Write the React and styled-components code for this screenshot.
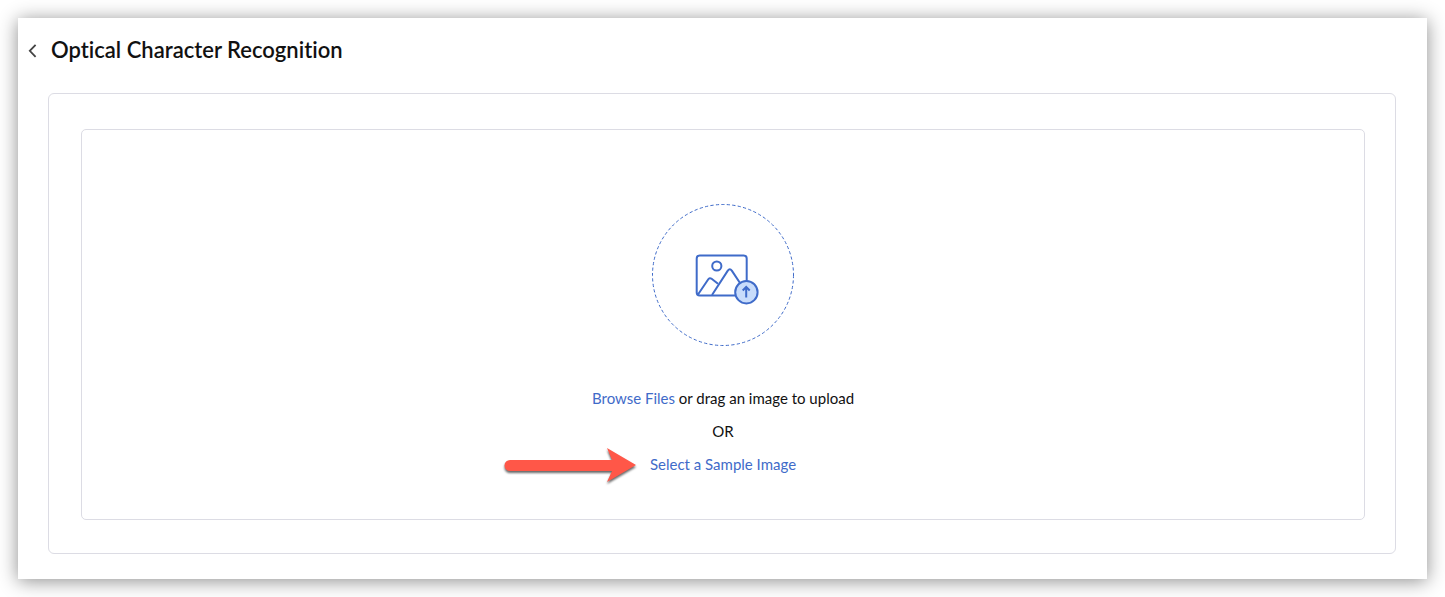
import styled, { createGlobalStyle } from "styled-components";


const App = () => {
    return(
        <>
        <GlobalStyle/>
        <Wrapper>
            <Header>
                <BackButton aria-label="Back">
                    <svg width="10" height="16" viewBox="0 0 10 16" fill="none">
                        <path d="M8.6 2.8L2.8 8.8L8.6 14.8" stroke="currentColor" strokeWidth="1.8"/>
                    </svg>
                </BackButton>
                <Title>Optical Character Recognition</Title>
            </Header>
            <Panel>
                <DropZone>
                    <UploadIcon/>
                    <Options>
                        <Line><LinkButton>Browse Files</LinkButton> or drag an image to upload</Line>
                        <Line>OR</Line>
                        <SampleLine>
                            <Arrow/>
                            <LinkButton>Select a Sample Image</LinkButton>
                        </SampleLine>
                    </Options>
                </DropZone>
            </Panel>
        </Wrapper>
        </>
    )
};

const UploadIcon = () => (
    <svg width="142" height="142" viewBox="0 0 142 142" fill="none" stroke="#3f6bc9">
        <circle cx="71" cy="71" r="70.5" strokeDasharray="3.2 2.3"/>
        <g strokeWidth="2" strokeLinejoin="round">
            <rect x="44.7" y="51.5" width="50" height="40" rx="3"/>
            <circle cx="64.8" cy="62" r="4.6"/>
            <path d="M46 90.5L56.3 75.2Q57.6 73.3 59.6 74.8L66 79.8"/>
            <path d="M60 91L75.8 66.6Q77.8 64 79.8 66.6L90 82"/>
            <circle cx="94.4" cy="88.2" r="11.2" fill="#c8dcfb"/>
            <path d="M94.2 93.6V84M90.7 86.5L94.2 83L97.7 86.5" strokeLinejoin="miter"/>
        </g>
    </svg>
);

const Arrow = () => (
    <ArrowSvg width="136" height="42" viewBox="0 0 136 42">
        <path
            d="M7 17H109L104 5L133 22L104 39L109 28H7A5.5 5.5 0 0 1 7 17Z"
            fill="#ff5748"
        />
    </ArrowSvg>
);

const GlobalStyle = createGlobalStyle`
    * {
        box-sizing: border-box;
    }
    body {
        margin: 0;
        padding: 18px;
        background-color: white;
        color: #111111;
        font-family: Lato, "Liberation Sans", sans-serif;
        font-size: 15px;
        font-variant-ligatures: none;
        line-height: 20px;
    }
    button {
        padding: 0;
        border: none;
        background: none;
        font: inherit;
        cursor: pointer;
    }
`;
const Wrapper = styled.div`
    padding: 18px 31px 25px 30px;
    background-color: white;
    box-shadow: 0 2px 18px rgba(0, 0, 0, 0.45);
`;
const Header = styled.header`
    display: flex;
    flex-direction: row;
    align-items: center;
    gap: 14px;
    margin: 0 0 29px -21px;
`;
const BackButton = styled.button`
    display: flex;
    color: #444444;
`;
const Title = styled.h1`
    margin: 0;
    font-size: 22px;
    font-weight: 600;
    line-height: 28px;
`;
const Panel = styled.main`
    padding: 35px 30px 33px 32px;
    border: 1px solid #dcdce4;
    border-radius: 6px;
`;
const DropZone = styled.section`
    display: flex;
    flex-direction: column;
    align-items: center;
    gap: 42px;
    padding: 74px 20px 45px;
    border: 1px solid #dcdce4;
    border-radius: 5px;
`;
const Options = styled.div`
    display: flex;
    flex-direction: column;
    align-items: center;
    gap: 13px;
`;
const Line = styled.p`
    margin: 0;
`;
const SampleLine = styled(Line)`
    position: relative;
`;
const LinkButton = styled.button`
    color: #3f6bc9;
    font-variant-ligatures: none;
`;
const ArrowSvg = styled.svg`
    position: absolute;
    right: calc(100% + 11px);
    top: 50%;
    transform: translateY(-50%);
    filter: drop-shadow(0 2px 1px rgba(0, 0, 0, 0.6));
`;

export default App;
